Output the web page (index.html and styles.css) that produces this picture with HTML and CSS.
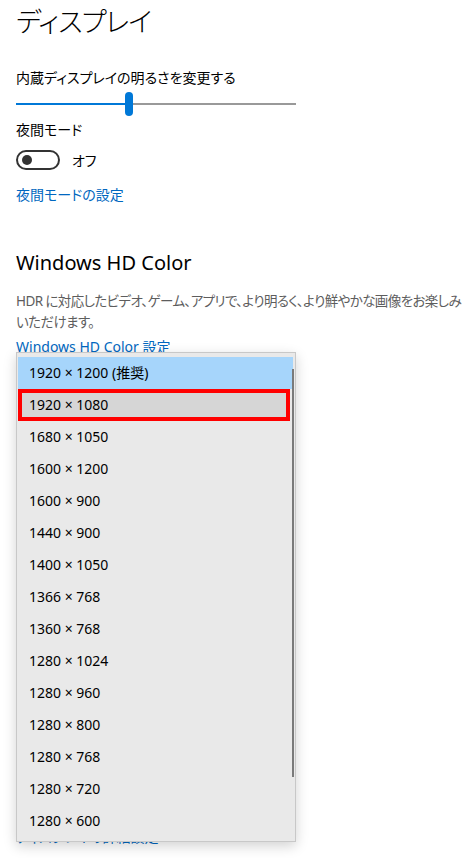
FILE: index.html
```html
<!DOCTYPE html>
<html>
<head>
<meta charset="UTF-8">
<title>ディスプレイ</title>
<link rel="stylesheet" href="styles.css">
</head>
<body>
<div class="page">
	<h1 class="title">ディスプレイ</h1>

	<div class="label">内蔵ディスプレイの明るさを変更する</div>
	<div class="slider">
		<div class="slider_fill"></div>
		<div class="slider_thumb"></div>
		<div class="slider_rest"></div>
	</div>

	<div class="label night_label">夜間モード</div>
	<div class="toggle_row">
		<span class="toggle"><span class="toggle_knob"></span></span>
		<span class="toggle_text">オフ</span>
	</div>
	<a class="link night_link" href="#">夜間モードの設定</a>

	<h2 class="sub_title">Windows HD Color</h2>
	<p class="desc">HDR に対応したビデオ、ゲーム、アプリで、より明るく、より鮮やかな画像をお楽しみいただけます。</p>
	<a class="link hdr_link" href="#">Windows HD Color 設定</a>
	<a class="link under_link" href="#">ディスプレイの詳細設定</a>
</div>

<div class="drop">
	<div class="drop_item recommend">1920 × 1200 (推奨)</div>
	<div class="drop_item picked">1920 × 1080</div>
	<div class="drop_item">1680 × 1050</div>
	<div class="drop_item">1600 × 1200</div>
	<div class="drop_item">1600 × 900</div>
	<div class="drop_item">1440 × 900</div>
	<div class="drop_item">1400 × 1050</div>
	<div class="drop_item">1366 × 768</div>
	<div class="drop_item">1360 × 768</div>
	<div class="drop_item">1280 × 1024</div>
	<div class="drop_item">1280 × 960</div>
	<div class="drop_item">1280 × 800</div>
	<div class="drop_item">1280 × 768</div>
	<div class="drop_item">1280 × 720</div>
	<div class="drop_item">1280 × 600</div>
	<div class="drop_scroll"></div>
</div>
</body>
</html>
```

FILE: styles.css
```css
*{
	margin:0;
	padding:0;
}
body{
	background-color:#fff;
	font-family:"Noto Sans", "Noto Sans CJK JP", sans-serif;
	font-feature-settings:"palt";
	color:#000;
	width:474px;
	height:858px;
	overflow:hidden;
}
.page{
	padding:2px 16px 0 16px;
	display:flex;
	flex-direction:column;
	align-items:flex-start;
}
.title{
	font-size:27px;
	font-weight:300;
	line-height:40px;
	letter-spacing:-1px;
}
.label{
	font-size:14px;
	line-height:20px;
	margin-top:26px;
}
.slider{
	display:flex;
	align-items:center;
	width:280px;
	height:24px;
	margin-top:4px;
}
.slider_fill{
	width:109px;
	height:2px;
	background-color:#0078d7;
}
.slider_thumb{
	width:8px;
	height:24px;
	border-radius:4px;
	background-color:#0078d7;
}
.slider_rest{
	flex:1;
	height:2px;
	background-color:#999;
}
.night_label{
	margin-top:4px;
}
.toggle_row{
	display:flex;
	align-items:center;
	margin-top:10px;
	height:20px;
}
.toggle{
	display:flex;
	align-items:center;
	box-sizing:border-box;
	width:44px;
	height:20px;
	border:2px solid #333;
	border-radius:10px;
	padding-left:4px;
}
.toggle_knob{
	width:10px;
	height:10px;
	border-radius:50%;
	background-color:#333;
}
.toggle_text{
	font-size:14px;
	margin-left:12px;
}
.link{
	color:#0067c0;
	font-size:14px;
	line-height:20px;
	text-decoration:none;
}
.night_link{
	margin-top:15px;
}
.sub_title{
	font-size:20px;
	font-weight:400;
	line-height:28px;
	margin-top:44px;
}
.desc{
	font-size:13.5px;
	line-height:21px;
	color:#5d5d5d;
	width:450px;
	letter-spacing:-0.6px;
	margin-top:14px;
}
.hdr_link{
	margin-top:4px;
}
.under_link{
	margin-top:470px;
}
.drop{
	position:absolute;
	left:16px;
	top:352px;
	width:280px;
	height:490px;
	box-sizing:border-box;
	padding:4px 2px 0 1px;
	background-color:#e9e9e9;
	border:1px solid #c8c8c8;
	box-shadow:0 4px 12px rgba(0,0,0,0.18);
}
.drop_item{
	font-size:14px;
	height:32px;
	line-height:31px;
	padding-left:11px;
	box-sizing:border-box;
}
.recommend{
	background-color:#a6d5fb;
}
.picked{
	background-color:#d6d6d6;
	border:4px solid #f00;
	line-height:23px;
	padding-left:7px;
	margin-right:3px;
}
.drop_scroll{
	position:absolute;
	left:275px;
	top:16px;
	width:2px;
	height:408px;
	background-color:#7a7a7a;
}
```
